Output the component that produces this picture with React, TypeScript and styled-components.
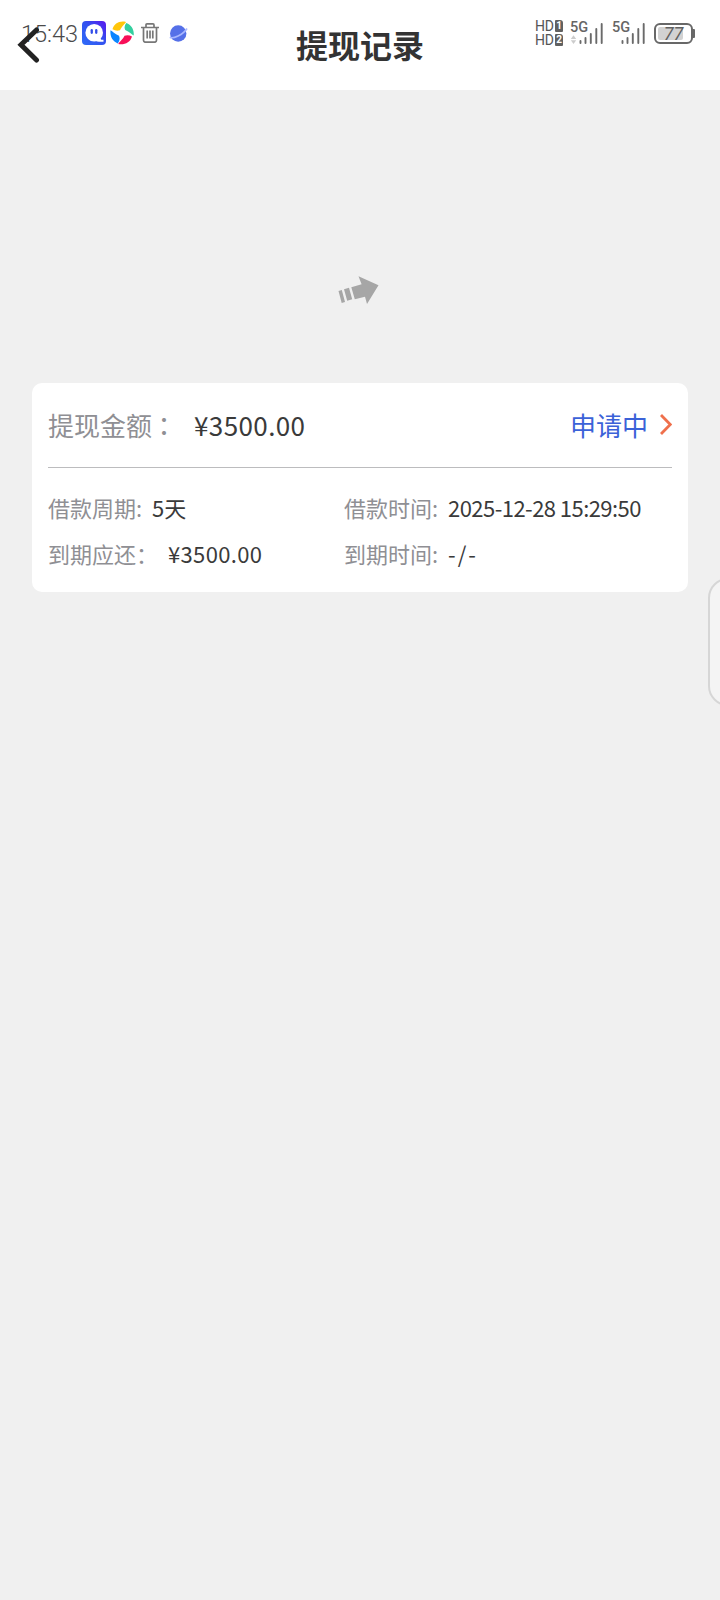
import React from 'react';
import styled, { createGlobalStyle } from 'styled-components';

const GlobalStyle = createGlobalStyle`
  * { box-sizing: border-box; }
  body {
    margin: 0;
    background: #f0f0f0;
    font-family: "Noto Sans CJK SC", sans-serif;
    color: #333;
  }
`;

const Page = styled.div`
  position: relative;
  min-height: 1600px;
  overflow: hidden;
`;

const Header = styled.header`
  position: relative;
  height: 90px;
  padding-bottom: 2px;
  background: #fff;
  display: flex;
  align-items: center;
  justify-content: center;
`;

const Title = styled.h1`
  margin: 0;
  font-size: 32px;
  line-height: 40px;
  font-weight: 700;
  color: #333;
`;

const BackButton = styled.button`
  position: absolute;
  left: 17px;
  top: 27px;
  width: 24px;
  height: 36px;
  padding: 0;
  border: 0;
  background: none;
  svg { display: block; }
`;

const StatusBar = styled.div`
  position: absolute;
  inset: 0 0 auto 0;
  height: 66px;
  padding: 0 25px 0 21px;
  display: flex;
  align-items: center;
  justify-content: space-between;
`;

const StatusGroup = styled.div<{ $gap: number }>`
  display: flex;
  align-items: center;
  gap: ${(p) => p.$gap}px;
  svg { display: block; flex: none; }
`;

const Clock = styled.span`
  width: 57px;
  font-family: Roboto, sans-serif;
  font-weight: 300;
  font-size: 23.5px;
  line-height: 26px;
  white-space: nowrap;
  color: #4a4a4a;
  padding-top: 1px;
`;

const Refresh = styled.div`
  height: 293px;
  padding: 185px 2px 0 0;
  display: flex;
  justify-content: center;
  svg { display: block; }
`;

const Card = styled.section`
  margin: 0 32px;
  height: 209px;
  padding: 0 16px;
  border-radius: 10px;
  background: #fff;
`;

const CardHead = styled.div`
  height: 85px;
  border-bottom: 1px solid #bcbcbe;
  display: flex;
  align-items: center;
  font-size: 26px;
  line-height: 40px;
`;

const Label = styled.span<{ $width: number }>`
  width: ${(p) => p.$width}px;
  flex: none;
  color: #8f8f94;
  white-space: pre;
`;

const CenteredColon = styled.span`
  margin-left: -1px;
  font-family: "Noto Sans CJK TC", sans-serif;
`;

const Value = styled.span<{ $spacing?: number }>`
  letter-spacing: ${(p) => p.$spacing ?? 0}px;
  color: #3a3a3a;
  white-space: nowrap;
`;

const Status = styled.span`
  margin-left: auto;
  display: flex;
  align-items: center;
  gap: 12px;
  color: #3b62d8;
  svg { display: block; margin-top: -2px; }
`;

const Details = styled.div`
  padding-top: 16px;
  display: grid;
  grid-template-columns: 296px 1fr;
  grid-auto-rows: 46px;
  align-items: center;
  font-size: 22px;
  line-height: 32px;
`;

const Field = styled.div`
  display: flex;
  align-items: center;
`;

const SideHandle = styled.div`
  position: absolute;
  left: 708px;
  top: 578px;
  width: 40px;
  height: 128px;
  border: 2px solid #d6d6d6;
  border-radius: 22px;
  background: #f4f4f4;
`;

const MessengerIcon = () => (
  <svg width="24" height="24" viewBox="0 0 24 24">
    <defs>
      <linearGradient id="msg" x1="0" y1="1" x2="1" y2="0">
        <stop offset="0" stopColor="#2f6cf8" />
        <stop offset=".55" stopColor="#3350ef" />
        <stop offset="1" stopColor="#5a16ee" />
      </linearGradient>
    </defs>
    <rect width="24" height="24" rx="4" fill="url(#msg)" />
    <circle cx="12.200" cy="11.700" r="8.800" fill="#fff" />
    <path d="M12 17.500h6.500l.8 1.200h2.200v2h-4.500q-2 0-3.200-1Z" fill="#fff" />
    <rect x="8.600" y="8" width="2.300" height="5" rx="1.150" fill="#304be8" />
    <rect x="13.100" y="8" width="2.300" height="5" rx="1.150" fill="#304be8" />
  </svg>
);

const PinwheelIcon = () => (
  <svg width="24" height="24" viewBox="0 0 24 24">
    <path d="M2.500 8.300C4 2.500 9.500-.5 16 1 15 3 12 5 10 9.300Q6 10.500 2.500 8.300Z" fill="#ffc60a" />
    <path d="M16.300 2c5.300 2 8 6.800 7.400 12.500-2-.8-4.200-3.800-8.500-5.500Q13.500 5.500 16.300 2Z" fill="#34cf9f" />
    <path d="M22 15.500c-1.700 6-7.500 8.800-13.800 7.600 1.300-2.600 4.300-4.200 6.300-8.400q4-1.200 7.500.8Z" fill="#f80f58" />
    <path d="M7.800 22.400C2.300 20.200-.2 15.200.5 9.300c2 .9 4.200 3.900 8.500 5.500q1.700 4-1.200 7.600Z" fill="#0b85ff" />
  </svg>
);

const TrashIcon = () => (
  <svg width="18" height="20" viewBox="0 0 18 20" fill="none" stroke="#777" strokeWidth="1.700">
    <path d="M0 4.500h18M5 4.200V1.900Q5 .9 6 .9h6q1 0 1 1v2.300M2.500 4.500v12.800q0 1.900 1.900 1.900h9.200q1.900 0 1.900-1.900V4.500M6.200 7.500v8M9 7.500v8M11.800 7.500v8" />
  </svg>
);

const PlanetIcon = () => (
  <svg width="19" height="17" viewBox="0 0 19 17">
    <circle cx="9.200" cy="8.500" r="8.200" fill="#5570e8" />
    <path d="M.8 12.300C4 14 14 10 18 3.500" fill="none" stroke="#a9b7ff" strokeWidth="1.700" />
  </svg>
);

const HdBox = styled.div`
  width: 28px;
  margin-right: -2px;
  display: flex;
  flex-direction: column;
  gap: 1px;
`;

const HdRow = styled.div`
  height: 13px;
  display: flex;
  align-items: center;
  justify-content: space-between;
  font: 400 14px/13px Roboto, sans-serif;
  letter-spacing: -0.3px;
  color: #555;
`;

const SimBadge = styled.span`
  width: 8px;
  height: 12px;
  border-radius: 1px 3px 1px 1px;
  background: #616161;
  color: #fff;
  font: 700 10px/12px Roboto, sans-serif;
  text-align: center;
  letter-spacing: 0;
`;

const SignalBox = styled.div`
  position: relative;
  width: 33px;
  height: 23px;
  svg { position: absolute; left: 0; bottom: 0; }
`;

const Network = styled.span`
  position: absolute;
  left: 0;
  top: -1px;
  font: 500 14.5px/13px Roboto, sans-serif;
  letter-spacing: 0;
  color: #666;
`;

const Signal = ({ data }: { data?: boolean }) => (
  <SignalBox>
    <Network>5G</Network>
    <svg width="33" height="23" viewBox="0 0 33 23">
      <g fill="none" stroke="#6a6a6a" strokeWidth="1.900" strokeLinecap="round">
        <path d="M10.500 19v2M15.500 16v5M20.800 12v9M26.300 7v14M31.700 2v19" />
      </g>
      {data && <path d="M3.500 13.300 6.200 17H.8ZM3.500 22 .8 18.300h5.400Z" fill="#ccc" />}
    </svg>
  </SignalBox>
);

const Battery = styled.div`
  position: relative;
  width: 39px;
  height: 21px;
  margin-right: 2px;
  border: 2px solid #686868;
  border-radius: 6px;
  padding: 2px;
  &::after {
    content: "";
    position: absolute;
    right: -4px;
    top: 4px;
    width: 2px;
    height: 9px;
    border-radius: 0 1px 1px 0;
    background: #686868;
  }
`;

const BatteryLevel = styled.div`
  width: 25px;
  height: 13px;
  border-radius: 2px;
  background: #d2d2d2;
`;

const BatteryText = styled.span`
  position: absolute;
  inset: 0;
  font: italic 400 18px/18px Roboto, sans-serif;
  text-align: center;
  color: #606060;
`;

export default function App() {
  return (
    <Page>
      <GlobalStyle />
      <Header>
        <Title>提现记录</Title>
        <StatusBar>
          <StatusGroup $gap={4}>
            <Clock>15:43</Clock>
            <MessengerIcon />
            <StatusGroup $gap={7}>
              <PinwheelIcon />
              <StatusGroup $gap={10}>
                <TrashIcon />
                <PlanetIcon />
              </StatusGroup>
            </StatusGroup>
          </StatusGroup>
          <StatusGroup $gap={9}>
            <HdBox>
              <HdRow>HD<SimBadge>1</SimBadge></HdRow>
              <HdRow>HD<SimBadge>2</SimBadge></HdRow>
            </HdBox>
            <Signal data />
            <Signal />
            <Battery>
              <BatteryLevel />
              <BatteryText>77</BatteryText>
            </Battery>
          </StatusGroup>
        </StatusBar>
        <BackButton aria-label="返回">
          <svg width="24" height="36" viewBox="0 0 24 36" fill="none">
            <path d="M19.500 3 4 17.700 19.500 33" stroke="#222" strokeWidth="5" strokeLinecap="round" />
          </svg>
        </BackButton>
      </Header>

      <Refresh>
        <svg width="42" height="30" viewBox="0 0 42 30" fill="#a6a6a6">
          <path d="M20.500 1.200 40.500 10.300 29 29l-2-7.300-10.200 2.500-3.500-12 10.300-3ZM6 14.300l5-1.500 3.200 11.500-5 1.500ZM.5 16l3.300-.9 3.200 12-3.300.9Z" />
        </svg>
      </Refresh>

      <Card>
        <CardHead>
          <Label $width={146}>提现金额<CenteredColon lang="zh-Hant">：</CenteredColon></Label>
          <Value $spacing={0.4}>¥3500.00</Value>
          <Status>
            申请中
            <svg width="12" height="21" viewBox="0 0 12 21" fill="none">
              <path d="m1 1 9.300 9.500L1 20" stroke="#ef704c" strokeWidth="2.800" />
            </svg>
          </Status>
        </CardHead>
        <Details>
          <Field>
            <Label $width={104}>借款周期:</Label>
            <Value>5天</Value>
          </Field>
          <Field>
            <Label $width={104}>借款时间:</Label>
            <Value $spacing={-0.55}>2025-12-28 15:29:50</Value>
          </Field>
          <Field>
            <Label $width={120}>到期应还：</Label>
            <Value $spacing={0.35}>¥3500.00</Value>
          </Field>
          <Field>
            <Label $width={104}>到期时间:</Label>
            <Value $spacing={2}>-/-</Value>
          </Field>
        </Details>
      </Card>
      <SideHandle />
    </Page>
  );
}
